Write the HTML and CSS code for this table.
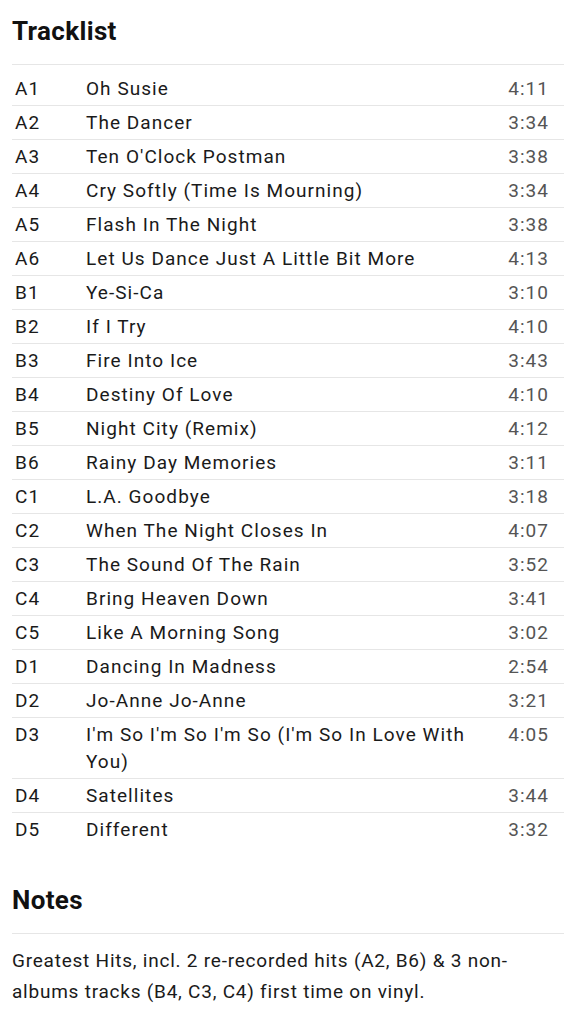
FILE: index.html
```html
<!DOCTYPE html>
<html>
<head>
<meta charset="utf-8">
<link rel="stylesheet" href="styles.css">
</head>
<body>
<section class="section">
  <h2 class="heading">Tracklist</h2>
  <div class="tracklist">
    <div class="row"><span class="pos">A1</span><span class="title">Oh Susie</span><span class="dur">4:11</span></div>
    <div class="row"><span class="pos">A2</span><span class="title">The Dancer</span><span class="dur">3:34</span></div>
    <div class="row"><span class="pos">A3</span><span class="title">Ten O'Clock Postman</span><span class="dur">3:38</span></div>
    <div class="row"><span class="pos">A4</span><span class="title">Cry Softly (Time Is Mourning)</span><span class="dur">3:34</span></div>
    <div class="row"><span class="pos">A5</span><span class="title">Flash In The Night</span><span class="dur">3:38</span></div>
    <div class="row"><span class="pos">A6</span><span class="title">Let Us Dance Just A Little Bit More</span><span class="dur">4:13</span></div>
    <div class="row"><span class="pos">B1</span><span class="title">Ye-Si-Ca</span><span class="dur">3:10</span></div>
    <div class="row"><span class="pos">B2</span><span class="title">If I Try</span><span class="dur">4:10</span></div>
    <div class="row"><span class="pos">B3</span><span class="title">Fire Into Ice</span><span class="dur">3:43</span></div>
    <div class="row"><span class="pos">B4</span><span class="title">Destiny Of Love</span><span class="dur">4:10</span></div>
    <div class="row"><span class="pos">B5</span><span class="title">Night City (Remix)</span><span class="dur">4:12</span></div>
    <div class="row"><span class="pos">B6</span><span class="title">Rainy Day Memories</span><span class="dur">3:11</span></div>
    <div class="row"><span class="pos">C1</span><span class="title">L.A. Goodbye</span><span class="dur">3:18</span></div>
    <div class="row"><span class="pos">C2</span><span class="title">When The Night Closes In</span><span class="dur">4:07</span></div>
    <div class="row"><span class="pos">C3</span><span class="title">The Sound Of The Rain</span><span class="dur">3:52</span></div>
    <div class="row"><span class="pos">C4</span><span class="title">Bring Heaven Down</span><span class="dur">3:41</span></div>
    <div class="row"><span class="pos">C5</span><span class="title">Like A Morning Song</span><span class="dur">3:02</span></div>
    <div class="row"><span class="pos">D1</span><span class="title">Dancing In Madness</span><span class="dur">2:54</span></div>
    <div class="row"><span class="pos">D2</span><span class="title">Jo-Anne Jo-Anne</span><span class="dur">3:21</span></div>
    <div class="row"><span class="pos">D3</span><span class="title">I'm So I'm So I'm So (I'm So In Love With You)</span><span class="dur">4:05</span></div>
    <div class="row"><span class="pos">D4</span><span class="title">Satellites</span><span class="dur">3:44</span></div>
    <div class="row"><span class="pos">D5</span><span class="title">Different</span><span class="dur">3:32</span></div>
  </div>
</section>
<section class="section notes">
  <h2 class="heading">Notes</h2>
  <p class="notes-text">Greatest Hits, incl. 2 re-recorded hits (A2, B6) &amp; 3 non-albums tracks (B4, C3, C4) first time on vinyl.</p>
</section>
</body>
</html>
```
FILE: styles.css
```css
html, body {
  margin: 0;
  padding: 0;
  background: #fff;
}
body {
  font-family: Roboto, "Liberation Sans", sans-serif;
  color: #1a1a1a;
  padding: 0 12px;
}
.heading {
  margin: 0;
  font-size: 26px;
  font-weight: 700;
  line-height: 32px;
  letter-spacing: 0.35px;
  padding-top: 15px;
  padding-bottom: 17px;
  color: #111;
}
.tracklist {
  border-top: 1px solid #e6e6e6;
  padding-top: 7px;
}
.row {
  display: grid;
  grid-template-columns: 74px 1fr 70px;
  font-size: 19px;
  line-height: 27px;
  letter-spacing: 1.05px;
  padding: 3px 0;
  border-bottom: 1px solid #e6e6e6;
}
.row:last-child {
  border-bottom: none;
}
.pos {
  padding-left: 3px;
  color: #1a1a1a;
}
.title {
  padding-right: 16px;
  color: #1a1a1a;
}
.dur {
  text-align: right;
  padding-right: 15px;
  color: #555;
}
.notes {
  padding-top: 38px;
}
.notes .heading {
  padding-top: 0;
}
.notes-text {
  margin: 0;
  border-top: 1px solid #e6e6e6;
  padding-top: 11px;
  font-size: 19px;
  line-height: 31px;
  letter-spacing: 0.77px;
  color: #1a1a1a;
}
```
